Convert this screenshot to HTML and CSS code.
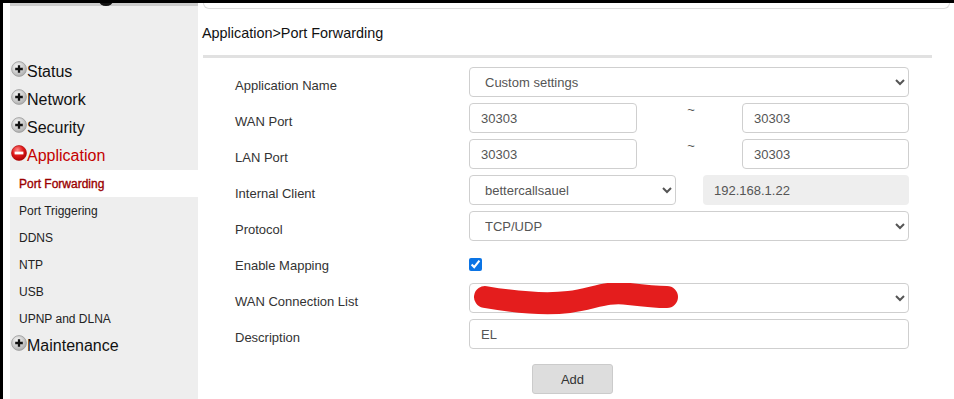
FILE: index.html
```html
<!DOCTYPE html>
<html lang="en">
<head>
<meta charset="utf-8">
<title>Port Forwarding</title>
<link rel="stylesheet" href="styles.css">
</head>
<body>
<div class="page">
  <aside class="sidebar">
    <div class="sb-top"><span class="logo-blob"></span></div>
    <nav class="menu">
      <div class="menu-item">
        <svg class="ico" viewBox="0 0 16 16"><defs><radialGradient id="g1" cx="40%" cy="35%" r="70%"><stop offset="0" stop-color="#fafafa"/><stop offset="1" stop-color="#a9a9a9"/></radialGradient></defs><circle cx="8" cy="8" r="7.4" fill="url(#g1)" stroke="#9a9a9a" stroke-width="0.8"/><path d="M8 4.2v7.6M4.2 8h7.6" stroke="#111" stroke-width="2.3"/></svg>
        <span>Status</span>
      </div>
      <div class="menu-item">
        <svg class="ico" viewBox="0 0 16 16"><circle cx="8" cy="8" r="7.4" fill="url(#g1)" stroke="#9a9a9a" stroke-width="0.8"/><path d="M8 4.2v7.6M4.2 8h7.6" stroke="#111" stroke-width="2.3"/></svg>
        <span>Network</span>
      </div>
      <div class="menu-item">
        <svg class="ico" viewBox="0 0 16 16"><circle cx="8" cy="8" r="7.4" fill="url(#g1)" stroke="#9a9a9a" stroke-width="0.8"/><path d="M8 4.2v7.6M4.2 8h7.6" stroke="#111" stroke-width="2.3"/></svg>
        <span>Security</span>
      </div>
      <div class="menu-item active">
        <svg class="ico" viewBox="0 0 16 16"><defs><radialGradient id="g2" cx="40%" cy="30%" r="75%"><stop offset="0" stop-color="#ff8a8a"/><stop offset="0.5" stop-color="#e01818"/><stop offset="1" stop-color="#a80000"/></radialGradient></defs><circle cx="8" cy="8" r="7.5" fill="url(#g2)" stroke="#a00" stroke-width="0.6"/><path d="M3.6 8h8.8" stroke="#fff" stroke-width="2.8"/></svg>
        <span>Application</span>
      </div>
      <div class="sub-item current">Port Forwarding</div>
      <div class="sub-item">Port Triggering</div>
      <div class="sub-item">DDNS</div>
      <div class="sub-item">NTP</div>
      <div class="sub-item">USB</div>
      <div class="sub-item">UPNP and DLNA</div>
      <div class="menu-item">
        <svg class="ico" viewBox="0 0 16 16"><circle cx="8" cy="8" r="7.4" fill="url(#g1)" stroke="#9a9a9a" stroke-width="0.8"/><path d="M8 4.2v7.6M4.2 8h7.6" stroke="#111" stroke-width="2.3"/></svg>
        <span>Maintenance</span>
      </div>
    </nav>
  </aside>
  <main class="main">
    <div class="topbox"></div>
    <div class="crumb">Application&gt;Port Forwarding</div>
    <div class="rule"></div>
    <div class="form">
      <label class="lbl">Application Name</label>
      <div class="field"><select class="ctl"><option>Custom settings</option></select></div>

      <label class="lbl">WAN Port</label>
      <div class="field range"><input class="ctl" value="30303"><span class="tilde">~</span><input class="ctl" value="30303"></div>

      <label class="lbl">LAN Port</label>
      <div class="field range"><input class="ctl" value="30303"><span class="tilde">~</span><input class="ctl" value="30303"></div>

      <label class="lbl">Internal Client</label>
      <div class="field pair"><select class="ctl"><option>bettercallsauel</option></select><div class="ip">192.168.1.22</div></div>

      <label class="lbl">Protocol</label>
      <div class="field"><select class="ctl"><option>TCP/UDP</option></select></div>

      <label class="lbl">Enable Mapping</label>
      <div class="field check"><input type="checkbox" checked></div>

      <label class="lbl">WAN Connection List</label>
      <div class="field redact-wrap"><select class="ctl"><option></option></select>
        <svg class="redact" viewBox="0 0 220 34" width="220" height="34"><path d="M16 14 C 45 19, 75 22, 100 19 S 135 8, 160 11 S 190 14, 198 14" fill="none" stroke="#e41d1d" stroke-width="22" stroke-linecap="round"/></svg>
      </div>

      <label class="lbl">Description</label>
      <div class="field"><input class="ctl" value="EL"></div>

      <div class="btn-row"><button class="btn">Add</button></div>
    </div>
  </main>
</div>
</body>
</html>
```

FILE: styles.css
```css
* { box-sizing: border-box; }
html, body { margin: 0; padding: 0; background: #fff; }
body { font-family: "Liberation Sans", Arial, sans-serif; width: 954px; height: 399px; overflow: hidden; }

.page {
  display: flex;
  height: 399px;
  border-top: 3px solid #000;
  border-left: 3px solid #000;
  padding-left: 7px;
}

.sidebar {
  width: 188px;
  flex: none;
  background: #eeeeee;
  display: flex;
  flex-direction: column;
}
.sb-top {
  height: 3px;
  background: #cbcbcb;
  position: relative;
  overflow: hidden;
}
.logo-blob {
  position: absolute;
  left: 89px;
  top: -8px;
  width: 14px;
  height: 11px;
  border-radius: 50%;
  background: #111;
}
.menu { padding-top: 52px; display: flex; flex-direction: column; }
.menu-item {
  height: 28px;
  display: flex;
  align-items: center;
  padding-left: 1px;
  font-size: 16px;
  color: #111;
}
.menu-item .ico { width: 16px; height: 16px; margin-top: -6px; flex: none; }
.menu-item.active { color: #c40000; }
.sub-item {
  height: 27px;
  display: flex;
  align-items: center;
  padding-left: 9px;
  font-size: 12px;
  color: #222;
}
.sub-item.current {
  background: #fff;
  color: #9a0000;
  -webkit-text-stroke: 0.35px #9a0000;
}

.main { flex: 1; min-width: 0; }
.topbox {
  margin: 0 4px 0 5px;
  height: 6px;
  border: 1px solid #dcdcdc;
  border-top: none;
  border-radius: 0 0 8px 8px;
}
.crumb {
  margin-top: 14px;
  padding-left: 4px;
  font-size: 14.4px;
  line-height: 20px;
  color: #111;
}
.rule {
  margin: 12px 0 0 5px;
  width: 729px;
  height: 3px;
  background: #e1e1e1;
}
.form {
  margin: 9px 0 0 37px;
  display: grid;
  grid-template-columns: 234px 440px;
  grid-auto-rows: 30px;
  row-gap: 6px;
}
.lbl {
  font-size: 13px;
  color: #333;
  display: flex;
  align-items: center;
  padding-top: 7px;
}
.field { display: flex; align-items: stretch; }
.ctl {
  width: 100%;
  height: 30px;
  border: 1px solid #cfcfcf;
  border-radius: 4px;
  background: #fff;
  font-family: "Liberation Sans", Arial, sans-serif;
  font-size: 13px;
  color: #555;
  padding: 0 11px;
  margin: 0;
  outline: none;
}
select.ctl { padding-left: 11px; padding-right: 4px; }
.range { display: grid; grid-template-columns: 168px 1fr 167px; }
.tilde {
  font-size: 13px;
  color: #555;
  text-align: center;
  line-height: 14px;
  padding-left: 3px;
}
.pair { display: grid; grid-template-columns: 207px 206px; column-gap: 27px; }
.ip {
  background: #eeeeee;
  border-radius: 4px;
  font-size: 13px;
  color: #555;
  display: flex;
  align-items: center;
  padding-left: 11px;
}
.check { align-items: center; }
.check input { width: 13px; height: 13px; margin: 4px 0 0 0; accent-color: #0b74e5; }
.redact-wrap { position: relative; }
.redact { position: absolute; left: 0; top: 0; }
.btn-row { grid-column: 2; padding-left: 63px; margin-top: 9px; }
.btn {
  width: 81px;
  height: 30px;
  background: #dddddd;
  border: 1px solid #cbcbcb;
  border-radius: 3px;
  font-family: "Liberation Sans", Arial, sans-serif;
  font-size: 13px;
  color: #333;
  padding: 0;
}
```
